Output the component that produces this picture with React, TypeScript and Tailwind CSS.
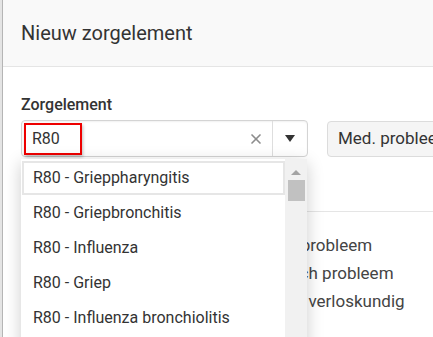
import { X } from "lucide-react";

const options = [
    "R80 - Grieppharyngitis",
    "R80 - Griepbronchitis",
    "R80 - Influenza",
    "R80 - Griep",
    "R80 - Influenza bronchiolitis",
    "R80 - Influenza pneumonie",
];

const categories = ["Sociaal probleem", "Psychisch probleem", "Zorgpad verloskundig"];

export default function App() {
    return (
        <div
            className="relative flex w-[433px] h-[337px] overflow-hidden bg-white text-[#333]"
            style={{ fontFamily: "Roboto, 'Liberation Sans', sans-serif" }}
        >
            <div className="w-[2px] shrink-0 bg-[#e4e4e4]" />
            <div className="flex-1 min-w-0 overflow-hidden border-l border-[#b5b5b5] flex flex-col">
                <div className="h-[67px] shrink-0 bg-[#f9f9f9] border-b border-[#e5e5e5] flex items-center pl-[18px]">
                    <h2 className="text-[20px] leading-none">Nieuw zorgelement</h2>
                </div>

                <div className="pl-[18px] pt-[28px]">
                    <label className="block text-[16px] font-medium leading-5">Zorgelement</label>
                    <div className="mt-[5px] flex items-center">
                        <div className="relative w-[287px] h-[37px] shrink-0 flex rounded border border-[#d4d4d4] shadow-[inset_0_1px_2px_rgba(0,0,0,0.06)]">
                            <div className="flex-1 flex items-center pl-[10px] text-[16px]">R80</div>
                            <div className="w-[32px] flex items-center justify-center text-[#8c8c8c]">
                                <X size={16} strokeWidth={2.5} />
                            </div>
                            <div className="w-[35px] flex items-center justify-center border-l border-[#dedede]">
                                <svg width="10" height="7" viewBox="0 0 10 7">
                                    <path d="M0 0h10L5 7z" fill="#333" />
                                </svg>
                            </div>
                            <div className="absolute left-[2px] top-[2px] w-[58px] h-[32px] border-2 border-[#ee0000] shadow-[1px_2px_3px_rgba(0,0,0,0.25)]" />
                        </div>
                        <div className="ml-[19px] h-[36px] px-[10px] shrink-0 flex items-center rounded bg-[#f5f5f5] border border-[#dcdcdc] text-[17px] whitespace-nowrap">
                            Med. probleem
                        </div>
                    </div>

                    <div className="mt-[54px] border-t border-[#e5e5e5] pt-[23px] pl-[220px] flex flex-col gap-[8px] text-[17px] text-[#444] leading-[20px] whitespace-nowrap">
                        {categories.map((c) => (
                            <div key={c}>{c}</div>
                        ))}
                    </div>
                </div>
            </div>

            <div className="absolute left-[21px] top-[159px] w-[286px] h-[200px] bg-white flex shadow-[0_4px_16px_rgba(0,0,0,0.2)]">
                <ul className="flex-1 pt-[2px] pl-[1px]">
                    {options.map((o, i) => (
                        <li
                            key={o}
                            className={
                                i === 0
                                    ? "h-[34px] flex items-center pl-[9px] text-[16px] border-2 border-[#e6e6e6] whitespace-nowrap"
                                    : "h-[35px] flex items-center pl-[11px] text-[16px] whitespace-nowrap"
                            }
                        >
                            {o}
                        </li>
                    ))}
                </ul>
                <div className="w-[22px] shrink-0 bg-[#f1f1f1] flex flex-col items-center pt-[11px]">
                    <svg width="10" height="5" viewBox="0 0 10 5">
                        <path d="M0 5L5 0l5 5z" fill="#a3a3a3" />
                    </svg>
                    <div className="mt-[5px] w-[17px] h-[21px] bg-[#c1c1c1]" />
                </div>
            </div>
        </div>
    );
}
